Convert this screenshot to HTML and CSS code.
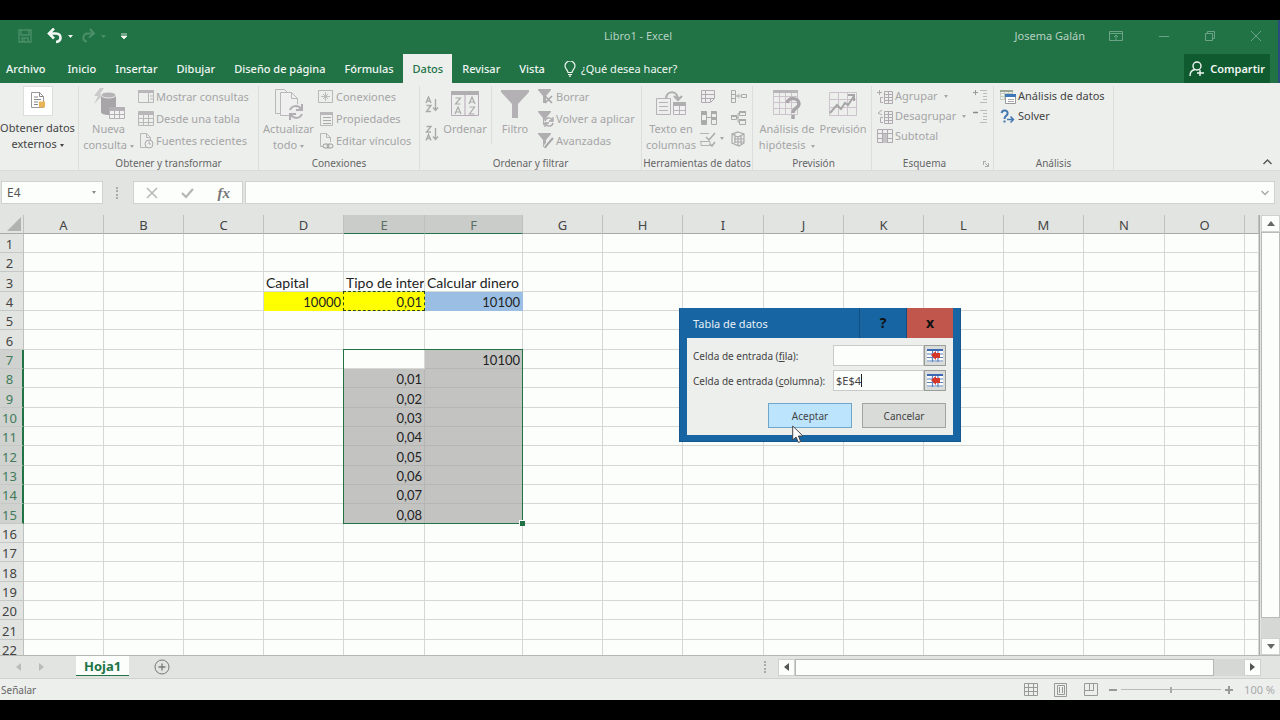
FILE: index.html
```html
<!DOCTYPE html>
<html lang="es">
<head>
<meta charset="utf-8">
<title>Libro1 - Excel</title>
<link rel="stylesheet" href="styles.css">
</head>
<body>
<div class="app">
  <header class="top">
    <div class="titlebar">
      <div class="quick">
        <button class="bare dim" aria-label="Guardar"><svg width="14" height="14" viewBox="0 0 14 14"><path d="M1 1h12v12H1zM3 1v5h8V1M4 13V9h6v4M6 10v3" fill="none" stroke="currentColor" stroke-width="1.3"/></svg></button>
        <button class="bare undo" aria-label="Deshacer"><svg width="16" height="16" viewBox="0 0 16 16"><path d="M7 .5L2 5.500l5 5M2.500 5.500H9c6 0 6 8 0 8.500" fill="none" stroke="currentColor" stroke-width="2.600"/></svg><svg width="5" height="3"><path d="M0 0h5L2.500 3z" fill="currentColor"/></svg></button>
        <button class="bare dim redo" aria-label="Rehacer"><svg width="14" height="16" viewBox="0 0 14 16"><path d="M8 1l4 4.500-5 4M12 5.500H6c-6 0-6 8-1 8" fill="none" stroke="currentColor" stroke-width="2"/></svg><svg width="5" height="3"><path d="M0 0h5L2.500 3z" fill="currentColor"/></svg></button>
        <button class="bare" aria-label="Personalizar"><svg width="6" height="7"><path d="M0 1h6M0 3h6L3 6z" fill="currentColor" stroke="currentColor" stroke-width=".8"/></svg></button>
      </div>
      <div class="doc">Libro1 - Excel</div>
      <div class="window">
        <span class="user">Josema Galán</span>
        <button class="bare" aria-label="Opciones de cinta"><svg width="14" height="10"><path d="M.5.5h13v9H.5zM.500 2.500h13M7 9V4M5 6l2-2 2 2" fill="none" stroke="currentColor"/></svg></button>
        <button class="bare" aria-label="Minimizar"><svg width="10" height="10"><path d="M0 5.500h10" stroke="currentColor"/></svg></button>
        <button class="bare" aria-label="Restaurar"><svg width="10" height="10"><path d="M.5 2.500h7v7h-7zM2.500 2V.5h7v7H8" fill="none" stroke="currentColor"/></svg></button>
        <button class="bare" aria-label="Cerrar"><svg width="10" height="10"><path d="M0 0l10 10M10 0L0 10" stroke="currentColor"/></svg></button>
      </div>
    </div>
    <nav class="tabs">
      <button class="tab">Archivo</button><button class="tab">Inicio</button><button class="tab">Insertar</button><button class="tab">Dibujar</button><button class="tab">Diseño de página</button><button class="tab">Fórmulas</button><button class="tab active">Datos</button><button class="tab">Revisar</button><button class="tab">Vista</button>
      <button class="tell"><svg width="12" height="16" viewBox="0 0 12 16"><path d="M4 11.500C4 9 1 8 1 5a5 5 0 0 1 10 0c0 3-3 4-3 6.500zM4 13.500h4M5 15.200h2" fill="none" stroke="currentColor" stroke-width="1.200"/></svg>¿Qué desea hacer?</button>
      <button class="share"><svg width="16" height="16" viewBox="0 0 16 16"><circle cx="8" cy="5" r="4" fill="none" stroke="currentColor" stroke-width="1.400"/><path d="M1 15c0-4 2-6 5-6.500M11 9v6M8 12h7" fill="none" stroke="currentColor" stroke-width="1.400"/></svg>Compartir</button>
    </nav>
  </header>

  <div class="ribbon">
    <section class="group g-external">
      <div class="group-body">
        <button class="big on"><span class="pic boxed"><svg width="16" height="18" viewBox="0 0 16 18"><path d="M1.500.5h8l4 4v11h-12z" fill="#fff" stroke="#999"/><path d="M9.500.5v4h4M4 5h4M4 7.500h7M4 10h4M4 12.500h4" fill="none" stroke="#888"/><path d="M9 9.500h6v6H9z" fill="#e9b455"/></svg></span>Obtener datos<span>externos <i class="caret"></i></span></button>
      </div>
      <h2></h2>
    </section>
    <section class="group g-query">
      <div class="group-body">
        <button class="big"><span class="pic"><svg width="32" height="32" viewBox="0 0 32 32"><path d="M7 0L1 8h4L1 16 11 6H7l4-6z" fill="#cbcbcb"/><path d="M8 7v17c0 4 15 4 15 0V7z" fill="#a7a5a7"/><ellipse cx="15.500" cy="7" rx="7.500" ry="3" fill="#b5b3b5" stroke="#eee"/><path d="M16.500 19.500h15v11h-15z" fill="#f1f1f1" stroke="#b3b1b3"/><path d="M16 20h16v3H16z" fill="#b3b1b3"/><path d="M16 26.500h16M21.500 20v11M26.500 20v11" stroke="#b3b1b3"/></svg></span>Nueva<span>consulta <i class="caret"></i></span></button>
        <div class="stack">
          <button class="small"><svg width="16" height="14"><path d="M.5.5h15v12H.5zM10.500 3v10" fill="none" stroke="#b9b7b9"/><path d="M0 0h16v3H0z" fill="#b9b7b9"/><path d="M12 6h3M12 9h3" stroke="#b9b7b9"/></svg>Mostrar consultas</button>
          <button class="small"><svg width="16" height="16"><path d="M.5.5h15v14H.5zM0 7.500h16M0 11.500h16M5.500 1v14M10.500 1v14" fill="none" stroke="#b9b7b9"/><path d="M0 1h16v3H0z" fill="#b9b7b9"/></svg>Desde una tabla</button>
          <button class="small"><svg width="16" height="16"><path d="M2.500.5h6l4 4v10h-10zM8.500.5v4h4" fill="none" stroke="#b9b7b9"/><circle cx="11" cy="11" r="4" fill="#eee" stroke="#aaa"/><path d="M11 8.500V11h2" fill="none" stroke="#aaa"/></svg>Fuentes recientes</button>
        </div>
      </div>
      <h2>Obtener y transformar</h2>
    </section>
    <section class="group g-connect">
      <div class="group-body">
        <button class="big"><span class="pic"><svg width="30" height="32" viewBox="0 0 30 32"><path d="M1.500 1.500h9l5 5M1.500 1.500v24h5" fill="none" stroke="#b9b7b9"/><path d="M6.500 4.500h11l6 6v17h-17z" fill="#f0f0f0" stroke="#b9b7b9"/><path d="M17.500 4.500v6h6" fill="none" stroke="#b9b7b9"/><circle cx="22" cy="24" r="8" fill="#eee"/><path d="M16 22c2-5 8-5 11-1M28 16v6h-6M28 26c-2 5-8 5-11 1M16 32v-6h6" fill="none" stroke="#b0aeb0" stroke-width="2"/></svg></span>Actualizar<span>todo <i class="caret"></i></span></button>
        <div class="stack">
          <button class="small"><svg width="16" height="14"><path d="M2 .5H.5v12H2M11 .5h3.500v12H11M2 .5h9M2 12.500h9" fill="none" stroke="#b9b7b9"/><path d="M7.500 2v9M3 6.500h9M5 4l5 5M10 4L5 9" stroke="#bbb"/></svg>Conexiones</button>
          <button class="small"><svg width="16" height="16"><path d="M2.500 1.500h12v13h-12z" fill="none" stroke="#b9b7b9"/><path d="M2 1h13v3H2z" fill="#b9b7b9"/><path d="M5 6.500h8M5 9.500h8M5 12.500h8" stroke="#aaa"/></svg>Propiedades</button>
          <button class="small"><svg width="16" height="16"><path d="M7 13.500H2.500V.5h6l4 4V9M8.500.5v4h4" fill="none" stroke="#b9b7b9"/><rect x="5" y="11" width="6" height="4" rx="2" fill="#eee" stroke="#999"/><rect x="9" y="11" width="6" height="4" rx="2" fill="none" stroke="#999"/></svg>Editar vínculos</button>
        </div>
      </div>
      <h2>Conexiones</h2>
    </section>
    <section class="group g-sort">
      <div class="group-body">
        <div class="az">
          <button class="bare" aria-label="Ordenar de A a Z"><svg width="14" height="17"><path d="M1 7l2.500-6L6 7M2 5h3M1.500 9.500H6L1.500 15.500H6M10.500 3v11M8 11.500l2.500 3 2.500-3" fill="none" stroke="#aaa" stroke-width="1.400"/></svg></button>
          <button class="bare" aria-label="Ordenar de Z a A"><svg width="14" height="17"><path d="M1 15.500L3.500 9.500 6 15.500M2 13.500h3M1.500 1.500H6L1.500 7H6M10.500 3v11M8 11.500l2.500 3 2.500-3" fill="none" stroke="#aaa" stroke-width="1.400"/></svg></button>
        </div>
        <button class="big"><span class="pic"><svg width="30" height="26"><path d="M1.500 1.500h27v23h-27zM15 4v21" fill="none" stroke="#b7a9b7"/><path d="M1 0h28v4H1z" fill="#b0aeb0"/><path d="M5.500 7h5l-5 6h5M5 23l3-7 3 7M6 21h4M19 13l3-7 3 7M20 11h4M19.500 16h5l-5 7h5" fill="none" stroke="#aaa" stroke-width="1.200"/></svg></span>Ordenar</button>
        <span class="rule"></span>
        <button class="big filter"><span class="pic"><svg width="28" height="28"><path d="M0 0h28v2L17 14v14h-6V14L0 2z" fill="#b3b1b3"/></svg></span>Filtro</button>
        <div class="stack">
          <button class="small"><svg width="16" height="16"><path d="M0 0h13v1L8 7v7H5V7L0 1z" fill="#b0aeb0"/><path d="M7 7l7 7M14 7l-7 7" stroke="#a7a5a7" stroke-width="1.600"/></svg>Borrar</button>
          <button class="small"><svg width="16" height="16"><path d="M0 0h13v1L8 7v7H5V7L0 1z" fill="#b0aeb0"/><circle cx="11" cy="11" r="5" fill="#eee"/><path d="M7 10c1-4 6-4 7-1M15 6v4h-4M15 12c-1 4-6 4-7 1M7 16v-4h4" fill="none" stroke="#a7a5a7" stroke-width="1.300"/></svg>Volver a aplicar</button>
          <button class="small"><svg width="16" height="16"><path d="M0 0h13v1L8 7v7H5V7L0 1z" fill="#b0aeb0"/><path d="M15 5l-8 9" stroke="#eee" stroke-width="4"/><path d="M15 5l-7 8-1 2" fill="none" stroke="#a7a5a7" stroke-width="2"/></svg>Avanzadas</button>
        </div>
      </div>
      <h2>Ordenar y filtrar</h2>
    </section>
    <section class="group g-tools">
      <div class="group-body">
        <button class="big"><span class="pic"><svg width="32" height="28"><path d="M1.500 8.500h14v16h-14zM4 12.500h9M4 16.500h9M4 20.500h9" fill="none" stroke="#b9b1b9"/><path d="M11 8c1-8 12-8 12 2M19 6l4 4 4-4" fill="none" stroke="#b0aeb0" stroke-width="2.200"/><path d="M18.500 12.500h12v12h-12zM24.500 13v11M19 20.500h12" fill="#f1f1f1" stroke="#b9b1b9"/><path d="M18 12h13v4H18z" fill="#b0aeb0"/></svg></span>Texto en<span>columnas</span></button>
        <div class="tools">
          <button class="bare" aria-label="Relleno rápido"><svg width="16" height="16"><path d="M1.500 1.500h13v8l-4 4h-9zM1 5.500h14M1 9.500h10M5.500 1v12M10.500 13V9.500h4" fill="none" stroke="#b3a9b3"/></svg></button>
          <button class="bare" aria-label="Consolidar"><svg width="17" height="16"><path d="M1.500 1.500h4v12h-4zM1 5.500h4M1 9.500h4M11.500 5.500h5v3h-5zM6 7h5M9.500 5L7 7l2.500 2" fill="none" stroke="#aaa"/></svg></button>
          <button class="bare" aria-label="Quitar duplicados"><svg width="17" height="16"><path d="M1.500 1.500h5v13h-5zM11.500 1.500h5v13h-5zM6 7.500h5" fill="none" stroke="#aaa"/><path d="M1 1h5v4H1zM1 10h5v4H1zM11 1h5v3h-5zM11 7h5v3h-5z" fill="#aaa"/></svg></button>
          <button class="bare" aria-label="Relaciones"><svg width="16" height="16"><path d="M1.500 5.500h5v4h-5zM9.500 1.500h6v4h-6zM9.500 9.500h6v5h-6zM7 7.500h1.500M9 12H8V3.500h1" fill="none" stroke="#aaa"/><path d="M1 5h6v2H1zM9 1h7v2H9zM9 9h7v2H9z" fill="#aaa"/></svg></button>
          <button class="bare" aria-label="Validación de datos"><svg width="16" height="16"><path d="M0 2.500h9M0 10.500h10v4H1v-4" fill="none" stroke="#b3b1b3"/><path d="M6 6l3 3 6-7M10 13l2 2 3-4" fill="none" stroke="#aaa" stroke-width="1.500"/></svg><i class="caret"></i></button>
          <button class="bare" aria-label="Administrar modelo de datos"><svg width="16" height="16"><path d="M8 1l6 2v9l-5 3-7-3V3zM2 3l6 3 6-3M8 6v9M4 8h10M4 11h10M5 3v9M11 5v9" fill="none" stroke="#aaa" stroke-width="1.200"/></svg></button>
        </div>
      </div>
      <h2>Herramientas de datos</h2>
    </section>
    <section class="group g-forecast">
      <div class="group-body">
        <button class="big"><span class="pic"><svg width="30" height="30"><path d="M1.500 1.500h24v24h-24zM1 7.500h24M1 13.500h24M1 19.500h24M7.500 1v24M13.500 1v24M19.500 1v24" fill="none" stroke="#cdc3cd"/><path d="M1 1h25v3H1z" fill="#b7b5b7"/><path d="M15 14c1-6 12-6 12 1 0 4-6 4-6 9M21 26v4" fill="none" stroke="#a7a5a7" stroke-width="3.500"/></svg></span>Análisis de<span>hipótesis &nbsp;<i class="caret"></i></span></button>
        <button class="big"><span class="pic"><svg width="30" height="26"><path d="M1.500 1.500h27v23h-27zM1 8.500h27M1 16.500h27M10.500 1v23M19.500 1v23" fill="none" stroke="#cdc3cd"/><path d="M2 22l7-8 4 4 4-6 3 2 6-9M20 4h6v6" fill="none" stroke="#a7a5a7" stroke-width="2"/></svg></span>Previsión</button>
      </div>
      <h2>Previsión</h2>
    </section>
    <section class="group g-outline">
      <div class="group-body">
        <div class="stack tight">
          <button class="small"><svg width="16" height="15"><path d="M7.500 2.500h8v12h-8zM8 5.500h8M8 8.500h8M8 11.500h8M11.500 3v11M0 3.500h5M2.500 1v5M6 8.500H3.500v5H6" fill="none" stroke="#b0a9b0"/></svg>Agrupar <i class="caret"></i></button>
          <button class="small"><svg width="16" height="15"><path d="M7.500 2.500h8v12h-8zM8 5.500h8M8 8.500h8M8 11.500h8M11.500 3v11M5 1L1 4l4 2M6 8.500H3.500v5H6" fill="none" stroke="#b0a9b0"/></svg>Desagrupar <i class="caret"></i></button>
          <button class="small"><svg width="16" height="15"><path d="M.5.5h15v13H.5zM0 4.500h16M0 9.500h16M5.500 0v14M10.500 0v14" fill="none" stroke="#b0a9b0"/><path d="M6 5h4v9H6z" fill="#c5c3c5"/></svg>Subtotal</button>
        </div>
        <div class="stack tight detail">
          <button class="bare" aria-label="Mostrar detalle"><svg width="16" height="15"><path d="M0 3.500h5M2.500 1v5" stroke="#999"/><path d="M7 1.500h7M10 4.500h4M10 7.500h4M10 10.500h4M7 13.500h7" stroke="#bbb"/></svg></button>
          <button class="bare" aria-label="Ocultar detalle"><svg width="16" height="15"><path d="M0 3.500h5" stroke="#888" stroke-width="1.500"/><path d="M7 1.500h7M10 4.500h4M10 7.500h4M10 10.500h4M7 13.500h7" stroke="#bbb"/></svg></button>
        </div>
      </div>
      <h2>Esquema<svg class="launcher" width="6" height="6"><path d="M0 .5h3M.5 0v4M5.500 2v3.500H2M2 2l3 3" fill="none" stroke="#aaa"/></svg></h2>
    </section>
    <section class="group g-analysis">
      <div class="group-body">
        <div class="stack tight">
          <button class="small on"><svg width="16" height="15"><path d="M.5 1.500h12v9H.5zM0 4.500h12M0 7.500h12M4.500 1v9M8.500 1v9" fill="none" stroke="#c3cdbf"/><path d="M0 1h13v2H0z" fill="#9aa596"/><path d="M5.500 5.500h10v9h-10z" fill="#fff" stroke="#999"/><path d="M5 5h11v3H5z" fill="#3d77b5"/><path d="M8 10.500h6M8 12.500h6" stroke="#aaa"/></svg>Análisis de datos</button>
          <button class="small on"><svg width="16" height="15"><path d="M1.500 4c1-4 7-3 6 1C7 7 4.500 7 4.500 10M4.500 11.500v2" fill="none" stroke="#4477b1" stroke-width="2"/><path d="M7 10.500h6M10.500 7.500l3 3-3 3" fill="none" stroke="#4477b1" stroke-width="1.500"/></svg>Solver</button>
        </div>
      </div>
      <h2>Análisis</h2>
    </section>
    <button class="bare collapse" aria-label="Contraer la cinta"><svg width="9" height="6"><path d="M.5 5l4-4 4 4" fill="none" stroke="#555" stroke-width="1.400"/></svg></button>
  </div>

  <div class="formula">
    <label class="namebox"><input type="text" value="E4" aria-label="Cuadro de nombres"><i class="caret"></i></label>
    <span class="dots"></span>
    <div class="fx">
      <button class="bare" aria-label="Cancelar edición"><svg width="12" height="12"><path d="M1 1l10 10M11 1L1 11" stroke="#b9b9b9" stroke-width="1.600"/></svg></button>
      <button class="bare" aria-label="Introducir"><svg width="13" height="12"><path d="M1 6l4 4 7-8" fill="none" stroke="#b5b5b5" stroke-width="2.200"/></svg></button>
      <button class="bare fxname" aria-label="Insertar función">fx</button>
    </div>
    <label class="entry"><input type="text" aria-label="Barra de fórmulas"><svg width="8" height="6"><path d="M.5 1L4 4.500 7.500 1" fill="none" stroke="#aaa" stroke-width="1.500"/></svg></label>
  </div>

  <main class="sheet">
    <div class="cells"><table id="grid"></table></div>
    <div class="vscroll">
      <button class="bare arrow" aria-label="Subir"><svg width="8" height="5"><path d="M0 5l4-5 4 5z" fill="#666"/></svg></button>
      <div class="vthumb"></div>
      <div class="vtrack"></div>
      <button class="bare arrow" aria-label="Bajar"><svg width="8" height="5"><path d="M0 0h8L4 5z" fill="#666"/></svg></button>
    </div>
  </main>

  <div class="sheetbar">
    <div class="nav">
      <button class="bare" aria-label="Hoja anterior"><svg width="5" height="8"><path d="M5 0v8L0 4z" fill="#bbb"/></svg></button>
      <button class="bare" aria-label="Hoja siguiente"><svg width="5" height="8"><path d="M0 0v8l5-4z" fill="#bbb"/></svg></button>
    </div>
    <button class="sheettab">Hoja1</button>
    <button class="bare add" aria-label="Hoja nueva"><svg width="16" height="16"><circle cx="8" cy="8" r="7" fill="none" stroke="#777"/><path d="M8 4.500v7M4.500 8h7" stroke="#777" stroke-width="1.300"/></svg></button>
    <div class="hscroll">
      <span class="dots"></span>
      <button class="bare arrow" aria-label="Izquierda"><svg width="5" height="8"><path d="M5 0v8L0 4z" fill="#555"/></svg></button>
      <div class="hthumb"></div>
      <div class="htrack"></div>
      <button class="bare arrow" aria-label="Derecha"><svg width="5" height="8"><path d="M0 0v8l5-4z" fill="#555"/></svg></button>
    </div>
  </div>

  <footer class="status">
    <span>Señalar</span>
    <div class="views">
      <button class="bare" aria-label="Normal"><svg width="14" height="14"><path d="M.5.5h13v12H.5zM0 4.500h14M0 8.500h14M4.500 0v13M9.500 0v13" fill="none" stroke="#999"/></svg></button>
      <button class="bare" aria-label="Diseño de página"><svg width="14" height="14"><path d="M.5.5h12v13H.5zM3.500 2.500h7v9h-7zM5.500 4v6M8.500 4v6" fill="none" stroke="#999"/></svg></button>
      <button class="bare" aria-label="Salto de página"><svg width="14" height="14"><path d="M.5.5h13v12H.5zM5.500 0v7.500M9.500 0v7.500M0 7.500h10" fill="none" stroke="#999"/></svg></button>
    </div>
    <div class="zoom">
      <button class="bare" aria-label="Alejar"><svg width="8" height="8"><path d="M0 4h8" stroke="#999" stroke-width="2"/></svg></button>
      <input type="range" min="0" max="200" value="100" aria-label="Zoom">
      <button class="bare" aria-label="Acercar"><svg width="8" height="8"><path d="M0 4h8M4 0v8" stroke="#999" stroke-width="2"/></svg></button>
      <span>100 %</span>
    </div>
  </footer>

  <div class="dialog" role="dialog" aria-labelledby="dlg-title">
    <div class="dialog-head">
      <span id="dlg-title">Tabla de datos</span>
      <button class="help">?</button>
      <button class="close">x</button>
    </div>
    <form class="dialog-body">
      <label for="fila">Celda de entrada (<u>f</u>ila):</label>
      <div class="ref"><input id="fila" type="text"><button type="button" aria-label="Elegir fila"><svg width="16" height="13"><path d="M0 0h16v13H0z" fill="#fff"/><path d="M0 0h16v2H0z" fill="#3c68b4"/><path d="M0 5h16M0 8.500h16M0 12h16M5.500 2v11M11 2v11" stroke="#5a82bd" stroke-width="1.200"/><path d="M4 6l5-4v2h4v5H9v2z" fill="#d4372a"/></svg></button></div>
      <label for="columna">Celda de entrada (<u>c</u>olumna):</label>
      <div class="ref"><input id="columna" type="text" value="$E$4"><button type="button" aria-label="Elegir columna"><svg width="16" height="13"><path d="M0 0h16v13H0z" fill="#fff"/><path d="M0 0h16v2H0z" fill="#3c68b4"/><path d="M0 5h16M0 8.500h16M0 12h16M5.500 2v11M11 2v11" stroke="#5a82bd" stroke-width="1.200"/><path d="M4 6l5-4v2h4v5H9v2z" fill="#d4372a"/></svg></button><span class="textcaret"></span></div>
      <div class="actions"><button type="button" class="ok">Aceptar</button><button type="button">Cancelar</button></div>
    </form>
    <svg class="pointer" width="12" height="19" viewBox="0 0 12 19"><path d="M.7 1v14l3.300-3 2.400 5.500 2.300-1L6.400 11h4.600z" fill="#fff" stroke="#444"/></svg>
  </div>
</div>
<script src="app.js"></script>
</body>
</html>
```
FILE: styles.css
```css
* { box-sizing: border-box; }
body {
  margin: 0;
  height: 100vh;
  padding: 20px 0;
  background: #000;
  font: 11px/16px "Noto Sans", sans-serif;
  color: #444;
}
button, input { font: inherit; color: inherit; }
button { border: 0; background: none; padding: 0; white-space: nowrap; }
svg { display: block; flex: none; }
.bare { display: flex; align-items: center; justify-content: center; }
.caret {
  display: inline-block;
  border: 2px solid transparent;
  border-top: 3px solid;
  border-bottom: 0;
  vertical-align: middle;
}
.app { position: relative; display: flex; flex-direction: column; height: 100%; background: #e2e4e2; }

.top { background: #217346; border-right: 2px solid #2b4a7e; color: #f2f7f4; }
.titlebar { display: grid; grid-template-columns: 1fr auto 1fr; align-items: center; height: 32px; padding-right: 2px; }
.quick { display: flex; align-items: center; padding-left: 18px; gap: 15px; }
.quick .undo, .quick .redo { gap: 5px; }
.quick .redo { margin-left: -6px; }
.quick .dim { color: #4b8f69; }
.doc { color: #b5d0c0; }
.window { display: flex; align-items: center; justify-content: flex-end; gap: 36px; padding-right: 15px; color: #6ba486; }
.user { color: #b5d0c0; margin-right: -12px; }
.tabs { display: flex; height: 31px; padding-top: 2px; }
.tab { padding: 0 9px 0 10px; font-weight: 500; }
.tab:first-child { padding-left: 6px; padding-right: 12px; }
.tab.active { background: #edefed; color: #217346; }
.tell { display: flex; align-items: center; gap: 5px; margin-left: 10px; }
.share { display: flex; align-items: center; gap: 5px; margin-left: auto; margin-right: 8px; padding: 0 5px; background: #0f5a2f; font-weight: 600; }

.ribbon { display: flex; flex: none; height: 88px; padding-top: 3px; background: #edefed; border-bottom: 1px solid #d9dbd9; color: #a5a5a5; }
.group { display: flex; flex-direction: column; flex: none; border-right: 1px solid #dcdedc; }
.group-body { display: flex; height: 70px; }
.group h2 { position: relative; margin: 0; height: 14px; font-size: 10px; font-weight: 400; line-height: 14px; text-align: center; color: #666; white-space: nowrap; }
.on { color: #444; }
.big { display: flex; flex-direction: column; align-items: center; flex: none; }
.big .pic { display: flex; justify-content: center; align-items: center; height: 35px; }
.big .boxed { width: 30px; height: 30px; margin-bottom: 4px; background: #fff; border: 1px solid #ddd; }
.stack { display: flex; flex-direction: column; }
.small { display: flex; align-items: center; gap: 2px; height: 22px; }
.tight .small { height: 20px; }
.small .caret { margin-left: 4px; }
.g-external { width: 79px; }
.g-external .big { width: 75px; }
.g-query { width: 180px; }
.g-query .big { width: 59px; }
.g-connect { width: 161px; }
.g-connect .big { width: 59px; }
.g-sort { width: 222px; }
.g-sort .big { width: 52px; }
.g-sort .az { display: flex; flex-direction: column; gap: 12px; width: 19px; padding: 10px 0 0 5px; }
.rule { width: 1px; height: 58px; background: #dcdedc; }
.g-sort .filter { width: 46px; }
.g-tools { width: 111px; }
.g-tools .big { width: 58px; }
.tools { display: grid; grid-template-columns: 30px 16px; grid-auto-rows: 21px; justify-items: start; }
.tools .caret { margin-left: 4px; }
.g-forecast { width: 119px; padding-left: 3px; }
.g-forecast .big:first-child { width: 62px; }
.g-forecast .big:last-child { width: 50px; }
.g-outline { width: 122px; }
.g-outline .group-body { padding-left: 5px; justify-content: space-between; padding-right: 4px; }
.g-outline h2 { padding-right: 16px; }
.detail .bare { height: 20px; }
.launcher { position: absolute; right: 4px; top: 5px; }
.g-analysis { width: 120px; }
.g-analysis .group-body { padding-left: 6px; }
.collapse { margin: auto 8px 5px auto; }

.formula { display: flex; flex: none; height: 44px; padding: 10px 5px 11px 1px; }
.formula input { width: 100%; height: 100%; border: 0; padding: 0 5px; background: none; outline: 0; }
.namebox, .entry, .fx { display: flex; align-items: center; background: #fcfefc; border: 1px solid #d0d2d0; }
.namebox { width: 102px; padding-right: 6px; color: #555; font-size: 12px; }
.namebox .caret { color: #888; }
.dots { width: 2px; height: 12px; border-left: 2px dotted #aaa; }
.formula .dots { margin: 6px 15px 0 13px; }
.fx { width: 110px; justify-content: space-between; padding: 0 12px; margin-right: 2px; }
.fxname { font: italic 700 15px/16px "Liberation Serif", serif; color: #777; }
.entry { flex: 1; padding-right: 5px; }

.sheet { display: flex; flex: 1; min-height: 0; }
.cells { flex: 1; min-width: 0; overflow: hidden; background: #fcfefc; border-right: 1px solid #aaa; }
.cells table { width: 100%; table-layout: fixed; border-collapse: separate; border-spacing: 0; font: 14px/16px Lato, "Noto Sans", sans-serif; color: #222; }
.cells tr { height: 19px; }
.cells tbody tr:nth-child(3n) { height: 20px; }
.cells th, .cells td { position: relative; padding: 2px 2px 0; height: 19px; border-right: 1px solid #d6d8d6; border-bottom: 1px solid #d6d8d6; white-space: nowrap; }
.cells tbody tr:nth-child(3n) > * { height: 20px; }
.cells th { background: #e2e4e2; color: #444; font: 13px/16px "Noto Sans", sans-serif; padding: 2px 0 0; }
.cells thead th { border-bottom-color: #a8aaa8; border-right-color: #bfc1bf; }
.cells tbody th { padding-right: 4px; border-right-color: #bfc1bf; border-bottom-color: #c6c8c6; }
.cells thead th.sel { background: #c9ccc9; color: #5c6f64; border-bottom-color: #217346; }
.cells tbody th.sel { background: #cfd2cf; color: #3f7a5a; border-right: 2px solid #217346; padding-right: 3px; }
.corner::after { content: ""; position: absolute; right: 2px; bottom: 2px; border: 7px solid transparent; border-right-color: #b1b3b1; border-bottom-color: #b1b3b1; }
.cells .num { text-align: right; font-size: 13px; }
.clip { overflow: hidden; }
.yellow { background: #ff0; }
.blue { background: #9bbfe4; }
td.shade { background: #c3c4c2; border-color: #b5b7b5; }
td.yellow, td.blue { border-color: transparent; }
.ants { position: absolute; inset: -1px; border: 1px dashed #2c4a10; }
.range { position: absolute; left: -1px; top: -1px; width: 180px; height: 175px; border: 1px solid #217346; z-index: 1; }
.range::after { content: ""; position: absolute; right: -3px; bottom: -3px; width: 5px; height: 5px; background: #217346; border: 1px solid #fff; border-right: 0; border-bottom: 0; }

.vscroll { display: flex; flex-direction: column; width: 19px; margin-left: 1px; background: #d6d8d6; }
.arrow { background: #fcfefc; border: 1px solid #cfd1cf; }
.vscroll .arrow { height: 17px; }
.vthumb { flex: 1; background: #fcfefc; border: 1px solid #b9bbb9; }
.vtrack { height: 20px; }

.sheetbar { display: flex; flex: none; height: 24px; border-top: 1px solid #b5b7b5; border-bottom: 1px solid #cfd1cf; }
.nav { display: flex; gap: 18px; width: 76px; padding-left: 16px; }
.sheettab { height: 20px; padding: 0 8px; background: #fcfefc; border-bottom: 1px solid #217346; color: #217346; font-size: 13px; font-weight: 700; line-height: 18px; }
.add { margin-left: 25px; }
.hscroll { display: flex; align-items: center; width: 516px; margin-left: auto; padding-right: 19px; }
.hscroll .dots { margin-right: 12px; }
.hscroll .arrow { width: 17px; height: 17px; }
.hthumb { flex: 1; height: 17px; background: #fcfefc; border: 1px solid #b5b7b5; }
.htrack { width: 30px; height: 17px; background: #d6d8d6; }

.status { display: flex; flex: none; align-items: center; height: 21px; padding: 0 5px 0 1px; background: #edefed; color: #666; font-size: 10px; }
.views { display: flex; gap: 16px; margin-left: auto; }
.zoom { display: flex; align-items: center; gap: 4px; margin-left: 11px; color: #aaa; }
.zoom input { appearance: none; width: 100px; height: 8px; margin: 0; background: linear-gradient(#bbb, #bbb) center / 100% 1px no-repeat; }
.zoom input::-webkit-slider-thumb { appearance: none; width: 2px; height: 6px; background: #aaa; }
.zoom span { margin-left: 7px; font-size: 11px; }

.dialog { position: absolute; left: 679px; top: 288px; width: 282px; padding: 0 7px 6px; background: #1766a3; border: 1px solid #14578b; border-width: 0 1px 1px; font-size: 10px; }
.dialog-head { display: flex; height: 30px; color: #e6eff6; font-size: 11px; }
.dialog-head span { flex: 1; padding-left: 6px; line-height: 31px; }
.dialog-head button { width: 47px; color: #111; font-weight: 700; font-size: 14px; border-left: 1px solid #124f80; }
.dialog-head .close { background: #c0564c; }
.dialog-body { display: grid; grid-template-columns: 1fr 113px; row-gap: 4px; align-items: center; padding: 7px 7px 7px 6px; background: #edefed; }
.dialog-body label { white-space: nowrap; }
.ref { position: relative; display: flex; height: 21px; }
.ref input { flex: 1; min-width: 0; padding: 0 2px; border: 1px solid #c9cbc9; background: #fcfefc; outline: 0; font-size: 11px; }
.ref button { display: flex; align-items: center; justify-content: center; width: 22px; background: #dadcda; border: 1px solid #9a9c9a; }
.textcaret { position: absolute; left: 28px; top: 4px; width: 1px; height: 13px; background: #222; }
.actions { grid-column: 1 / -1; display: flex; justify-content: flex-end; gap: 10px; margin-top: 8px; }
.actions button { width: 84px; height: 25px; background: #d9dbd9; border: 1px solid #a2a4a2; }
.actions .ok { background: #bce4fd; border-color: #6fa6ca; }
.pointer { position: absolute; left: 112px; top: 117px; }
```
FILE: app.js
```js
const widths = [80, 80, 80, 80, 81, 98, 80, 80, 81, 80, 80, 80, 80, 81, 80];
const letters = 'ABCDEFGHIJKLMNO'.split('');
const content = {
  D3: ['Capital', ''],
  E3: ['Tipo de inter', 'clip'],
  F3: ['Calcular dinero', ''],
  D4: ['10000', 'num yellow'],
  E4: ['0,01<span class="ants"></span>', 'num yellow'],
  F4: ['10100', 'num blue'],
  E7: ['<span class="range"></span>', ''],
  F7: ['10100', 'num shade']
};
for (let i = 1; i <= 8; i++) {
  content['E' + (7 + i)] = ['0,0' + i, 'num shade'];
  content['F' + (7 + i)] = ['', 'shade'];
}

let html = '<colgroup><col style="width:24px">';
html += widths.map(w => `<col style="width:${w}px">`).join('') + '<col></colgroup>';
html += '<thead><tr><th class="corner"></th>';
html += letters.map(l => `<th${l === 'E' || l === 'F' ? ' class="sel"' : ''}>${l}</th>`).join('');
html += '<th></th></tr></thead><tbody>';
for (let row = 1; row <= 22; row++) {
  html += `<tr><th${row >= 7 && row <= 15 ? ' class="sel"' : ''}>${row}</th>`;
  html += letters.map(l => {
    const [text, cls] = content[l + row] || ['', ''];
    return `<td class="${cls}">${text}</td>`;
  }).join('');
  html += '<td></td></tr>';
}
document.getElementById('grid').innerHTML = html + '</tbody>';
```
